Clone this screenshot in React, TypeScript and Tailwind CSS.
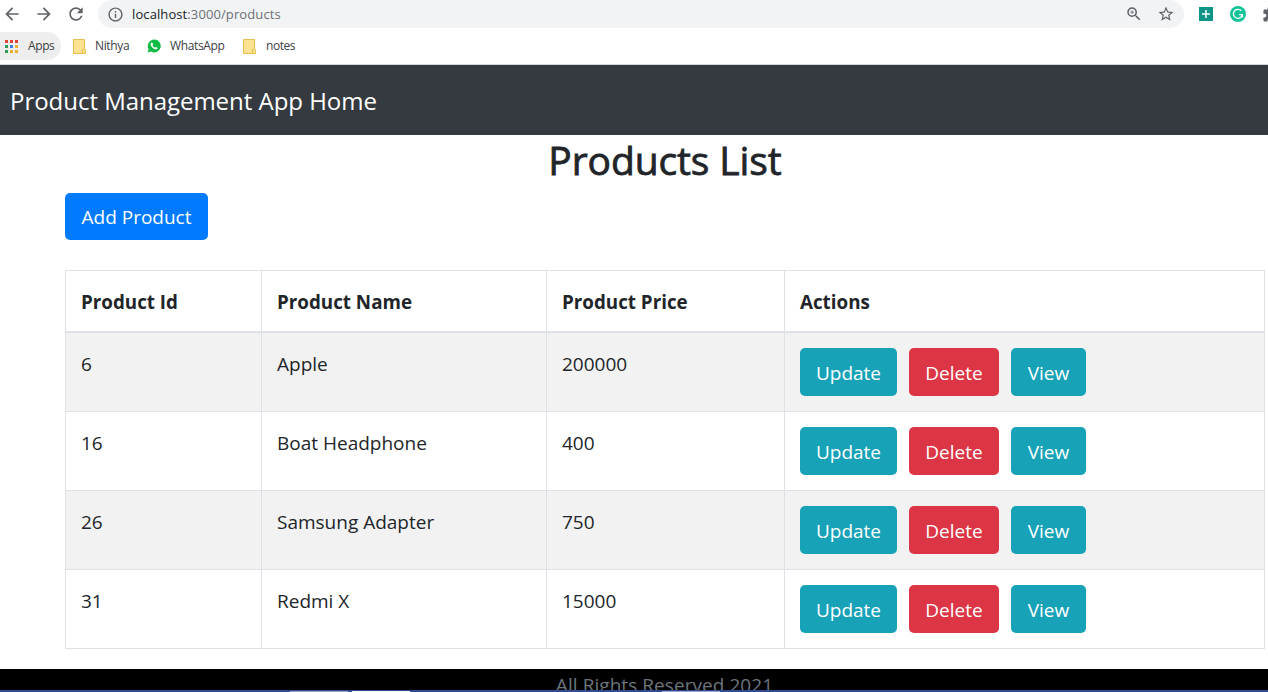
import type { ReactNode } from "react";
import { MdArrowBack, MdArrowForward, MdRefresh, MdInfoOutline, MdZoomIn, MdStarBorder, MdExtension } from "react-icons/md";

const products = [
  { id: 6, name: "Apple", price: 200000 },
  { id: 16, name: "Boat Headphone", price: 400 },
  { id: 26, name: "Samsung Adapter", price: 750 },
  { id: 31, name: "Redmi X", price: 15000 },
];

const appColors = [
  "bg-[#e0443a]", "bg-[#e0443a]", "bg-[#e0443a]",
  "bg-[#2e9e58]", "bg-[#3b7de0]", "bg-[#eab02c]",
  "bg-[#2e9e58]", "bg-[#eab02c]", "bg-[#eab02c]",
];

function NoteIcon() {
  return (
    <svg width="13" height="15" viewBox="0 0 13 15" className="shrink-0">
      <path d="M.5 .5h11v9.5l1 1v3.5H.5z" fill="#fde293" stroke="#e8c04d" />
      <path d="M9.500 14.500v-4h2" fill="none" stroke="#e8c04d" />
    </svg>
  );
}

function WhatsAppIcon() {
  return (
    <svg width="14" height="14" viewBox="0 0 24 24" className="shrink-0">
      <path d="M12.300 1A11 11 0 0 0 2.800 17.500L1 23l5.800-1.600A11 11 0 1 0 12.300 1z" fill="#12bb45" />
      <path
        d="M8.200 6c-.8.100-2 1.300-1.900 2.900.2 3.600 4.700 8.300 8.700 8.700 1.600.1 3-1 3.100-2.300 0-.5-2.400-1.800-3-1.800-.5 0-1 1.400-1.600 1.300-1.600-.5-3.500-2.400-4.100-4 0-.5 1.100-1 1.100-1.500 0-.7-1.200-3.300-2.300-3.300z"
        fill="#fff"
      />
    </svg>
  );
}

function Browser() {
  return (
    <header className="h-[65px] w-full shrink-0 overflow-hidden border-b border-[#d3d6da] bg-white font-['Open_Sans',sans-serif] text-[#5f6368]">
      <div className="flex h-7 items-center">
        <div className="flex h-7 w-[98px] shrink-0 items-center gap-[12px] pl-[2px]">
          <MdArrowBack size={20} />
          <MdArrowForward size={20} />
          <MdRefresh size={20} />
        </div>
        <div className="flex h-7 w-[1086px] shrink-0 items-center rounded-full bg-[#f1f3f4] pl-[9px] pr-[9px]">
          <MdInfoOutline size={17} />
          <span className="ml-[8px] pt-[2px] text-[13px] tracking-[0.1px] text-[#6b6f74]">
            <span className="text-[#202124]">localhost</span>:3000/products
          </span>
          <MdZoomIn size={18} className="ml-auto" />
          <MdStarBorder size={18} className="ml-[14px]" />
        </div>
        <div className="ml-[15px] flex h-[14px] w-[14px] shrink-0 items-center justify-center bg-[#0f9488]">
          <svg width="14" height="14" viewBox="0 0 14 14">
            <path d="M7 3v8M3 7h8" stroke="#fff" strokeWidth="1.500" />
          </svg>
        </div>
        <svg width="16" height="16" viewBox="0 0 16 16" className="ml-[17px] shrink-0">
          <circle cx="8" cy="8" r="8" fill="#15c39a" />
          <path d="M11.300 4.800A4.500 4.500 0 1 0 12.400 8.600H9.200M12.400 8.600v2.800" fill="none" stroke="#fff" strokeWidth="1.300" />
        </svg>
        <MdExtension size={17} className="ml-[16px] shrink-0" />
      </div>
      <div className="mt-1 flex h-7 items-center text-[12px] text-[#3c4043]">
        <div className="flex h-7 w-[61px] items-center rounded-r-full bg-[#eeeeee] pl-[5px]">
          <div className="grid grid-cols-3 gap-[2px]">
            {appColors.map((c, i) => (
              <i key={i} className={`h-[3px] w-[3px] ${c}`} />
            ))}
          </div>
          <span className="ml-[10px] tracking-[-0.4px]">Apps</span>
        </div>
        <div className="ml-[12px] flex w-[74px] items-center gap-[9px]"><NoteIcon /><span className="tracking-[-0.35px]">Nithya</span></div>
        <div className="flex w-[96px] items-center gap-[9px]"><WhatsAppIcon /><span className="tracking-[-0.35px]">WhatsApp</span></div>
        <div className="flex items-center gap-[10px]"><NoteIcon /><span className="tracking-[-0.45px]">notes</span></div>
      </div>
    </header>
  );
}

function Cell({ w, children }: { w: string; children: ReactNode }) {
  return <div className={`${w} shrink-0 border-l border-[#dee2e6] pl-[15px] leading-[30px] whitespace-nowrap`}>{children}</div>;
}

function Btn({ cls, children }: { cls: string; children: ReactNode }) {
  return <button className={`${cls} flex shrink-0 items-center justify-center rounded-[5px] text-[19px] text-white`}>{children}</button>;
}

export default function App() {
  return (
    <div className="flex h-[692px] w-[1268px] flex-col overflow-hidden bg-white font-['Open_Sans','Noto_Sans',sans-serif] text-[19px] text-[#212529]">
      <Browser />
      <nav className="flex h-[70px] shrink-0 items-center bg-[#343a40] pl-[10px] pt-px text-[24px] text-white">
        <span className="whitespace-nowrap tracking-[-0.03px]">Product Management App Home</span>
      </nav>
      <main className="ml-[65px] flex h-[534px] w-[1200px] shrink-0 flex-col">
        <h2 className="h-[58px] pt-px text-center text-[39px] leading-[48px] tracking-[-0.1px] [-webkit-text-stroke:0.8px_#212529]">Products List</h2>
        <Btn cls="h-[47px] w-[143px] bg-[#007bff] pt-px">Add Product</Btn>
        <div className="mt-[30px] border-r border-t border-[#dee2e6]">
          <div className="flex h-[62px] border-b-2 border-[#dee2e6] pt-0 text-[18.800px] font-bold">
            <Cell w="w-[196px] pt-[16px]">Product Id</Cell>
            <Cell w="w-[285px] pt-[16px]">Product Name</Cell>
            <Cell w="w-[238px] pt-[16px]">Product Price</Cell>
            <Cell w="w-[480px] pt-[16px]">Actions</Cell>
          </div>
          {products.map((p, i) => (
            <div key={p.id} className={`flex h-[79px] border-b border-[#dee2e6] ${i % 2 === 0 ? "bg-[#f2f2f2]" : "bg-white"}`}>
              <Cell w="w-[196px] pt-[16px]">{p.id}</Cell>
              <Cell w="w-[285px] pt-[16px]">{p.name}</Cell>
              <Cell w="w-[238px] pt-[16px]">{p.price}</Cell>
              <Cell w="w-[480px] pt-[15px]">
                <div className="flex gap-[12px]">
                  <Btn cls="h-[48px] w-[97px] bg-[#17a2b8] pt-[2px]">Update</Btn>
                  <Btn cls="h-[48px] w-[90px] bg-[#dc3545] pt-[2px]">Delete</Btn>
                  <Btn cls="h-[48px] w-[75px] bg-[#17a2b8] pt-[2px]">View</Btn>
                </div>
              </Cell>
            </div>
          ))}
        </div>
      </main>
      <footer className="h-[21px] shrink-0 overflow-hidden bg-black pl-[61px] text-center text-[19px] leading-[32px] text-[#6c757d]">
        <span className="tracking-[0.06px]">All Rights Reserved 2021</span>
      </footer>
      <div className="flex h-[2px] shrink-0 items-end bg-[#314b92]">
        <i className="ml-[290px] h-px w-[58px] bg-[#a09fce]" />
        <i className="ml-[4px] h-px w-[58px] bg-[#f0f0fa]" />
        <i className="ml-[252px] h-px w-[58px] bg-[#a09fce]" />
      </div>
    </div>
  );
}
